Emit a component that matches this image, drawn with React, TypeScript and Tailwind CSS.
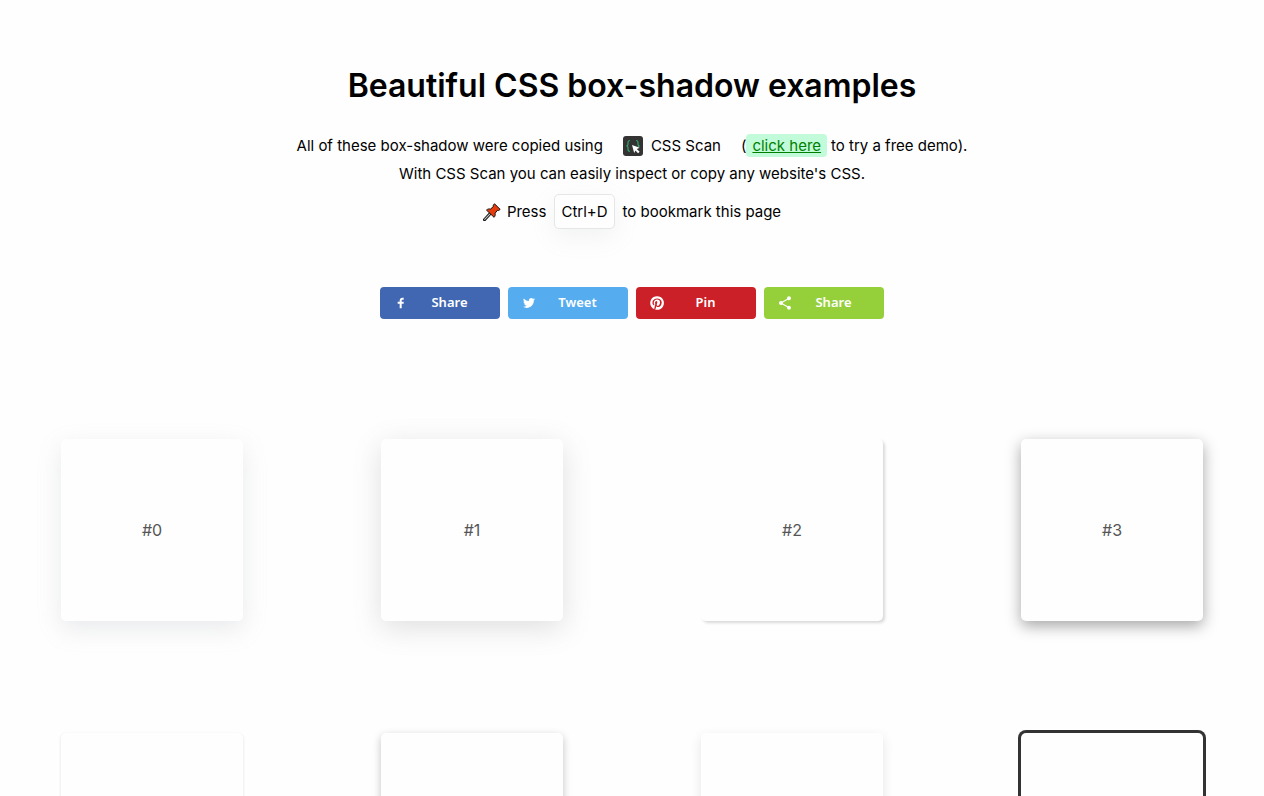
import React from "react";

const networks = [
  { name: "facebook", label: "Share", bg: "bg-[#4267b2]" },
  { name: "twitter", label: "Tweet", bg: "bg-[#55acee]" },
  { name: "pinterest", label: "Pin", bg: "bg-[#cb2027]" },
  { name: "sharethis", label: "Share", bg: "bg-[#95d03a]" },
];

const shadows = [
  "shadow-[0_8px_24px_rgba(149,157,165,0.2)]",
  "shadow-[0_7px_29px_rgba(100,100,111,0.2)]",
  "shadow-[2px_2px_3px_rgba(0,0,0,0.15)]",
  "shadow-[0_5px_15px_rgba(0,0,0,0.35)]",
  "shadow-[0_1px_3px_rgba(0,0,0,0.12)]",
  "shadow-[0_3px_8px_rgba(0,0,0,0.24)]",
  "shadow-[0_4px_12px_rgba(0,0,0,0.1)]",
  "shadow-[0_0_0_3px_#333333]",
];

function NetworkIcon({ name }: { name: string }) {
  const cls = "size-4 shrink-0 fill-white";
  if (name === "facebook")
    return (
      <svg viewBox="0 0 40 40" className={cls} aria-hidden="true">
        <path d="m21.7 16.7h5v5h-5v11.6h-5v-11.6h-5v-5h5v-2.1c0-2 0.6-4.5 1.8-5.9 1.3-1.3 2.8-2 4.7-2h3.5v5h-3.5c-0.9 0-1.5 0.6-1.5 1.5v3.5z" />
      </svg>
    );
  if (name === "twitter")
    return (
      <svg viewBox="0 0 40 40" className={cls} aria-hidden="true">
        <path d="m31.5 11.7c1.3-0.8 2.2-2 2.7-3.4-1.4 0.7-2.7 1.2-4 1.4-1.1-1.2-2.6-1.9-4.4-1.9-1.7 0-3.2 0.6-4.4 1.8-1.2 1.2-1.8 2.7-1.8 4.4 0 0.5 0.1 0.9 0.2 1.3-5.1-0.1-9.4-2.3-12.7-6.4-0.6 1-0.9 2.1-0.9 3.1 0 2.2 1 3.9 2.8 5.2-1.1-0.1-2-0.4-2.8-0.8 0 1.5 0.5 2.8 1.4 4 0.9 1.1 2.1 1.8 3.5 2.1-0.5 0.1-1 0.2-1.6 0.2-0.5 0-0.9 0-1.1-0.1 0.4 1.2 1.1 2.3 2.1 3 1.1 0.8 2.3 1.2 3.6 1.3-2.2 1.7-4.7 2.6-7.6 2.6-0.7 0-1.2 0-1.5-0.1 2.8 1.9 6 2.8 9.5 2.8 3.5 0 6.7-0.9 9.4-2.7 2.8-1.8 4.8-4.1 6.1-6.7 1.3-2.6 1.9-5.3 1.9-8.1v-0.8c1.3-0.9 2.3-2 3.1-3.2-1.1 0.5-2.3 0.8-3.5 1z" />
      </svg>
    );
  if (name === "pinterest")
    return (
      <svg viewBox="0 0 40 40" className={cls} aria-hidden="true">
        <path d="m37.3 20q0 4.7-2.3 8.6t-6.3 6.2-8.6 2.3q-2.4 0-4.8-0.7 1.3-2 1.7-3.6 0.2-0.8 1.2-4.7 0.5 0.8 1.7 1.5t2.5 0.6q2.7 0 4.8-1.5t3.3-4.2 1.2-6.1q0-2.5-1.4-4.7t-3.8-3.7-5.7-1.4q-2.4 0-4.4 0.7t-3.4 1.7-2.5 2.4-1.5 2.9-0.4 3q0 2.4 0.8 4.1t2.7 2.5q0.6 0.3 0.8-0.5 0.1-0.1 0.2-0.6t0.2-0.7q0.1-0.5-0.3-1-1.1-1.3-1.1-3.3 0-3.4 2.3-5.8t6.1-2.5q3.4 0 5.3 1.9t1.9 4.7q0 3.8-1.6 6.5t-3.9 2.6q-1.3 0-2.2-0.9t-0.5-2.4q0.2-0.8 0.6-2.1t0.7-2.3 0.2-1.6q0-1.2-0.6-1.9t-1.7-0.7q-1.4 0-2.3 1.2t-1 3.2q0 1.6 0.6 2.7l-2.2 9.4q-0.4 1.5-0.3 3.9-4.6-2-7.5-6.3t-2.8-9.4q0-4.7 2.3-8.6t6.2-6.2 8.6-2.3 8.6 2.3 6.3 6.2 2.3 8.6z" />
      </svg>
    );
  return (
    <svg viewBox="0 0 40 40" className={cls} aria-hidden="true">
      <path d="m30 26.8c2.7 0 4.8 2.2 4.8 4.8s-2.1 5-4.8 5-4.8-2.3-4.8-5c0-0.3 0-0.7 0-1.1l-11.8-6.8c-0.9 0.8-2.1 1.3-3.4 1.3-2.7 0-5-2.3-5-5s2.3-5 5-5c1.3 0 2.5 0.5 3.4 1.3l11.8-6.8c-0.1-0.4-0.2-0.8-0.2-1.1 0-2.8 2.3-5 5-5s5 2.2 5 5-2.3 5-5 5c-1.3 0-2.5-0.6-3.4-1.4l-11.8 6.8c0.1 0.4 0.2 0.8 0.2 1.2s-0.1 0.8-0.2 1.2l11.9 6.8c0.9-0.7 2.1-1.2 3.3-1.2z" />
    </svg>
  );
}

function ScanLogo() {
  return (
    <svg viewBox="0 0 20 20" className="size-5 shrink-0" aria-hidden="true">
      <rect width="20" height="20" rx="3" fill="#333333" />
      <g fill="none" stroke="#35a567" strokeWidth="1.2">
        <path d="M6.9 4.500C5.300 4.500 5 5.300 5 6.500V8.300C5 9.300 4.500 9.900 3.400 9.900C4.500 9.900 5 10.500 5 11.500V13.300C5 14.500 5.300 15.300 6.900 15.300" />
        <path d="M13.100 4.500C14.700 4.500 15 5.300 15 6.500V8.300C15 9.300 15.500 9.900 16.600 9.900C15.800 9.900 15.300 10.200 15.100 10.800" />
      </g>
      <path d="M9 9l7.700 2.800-2.900 1.300 2.800 2.700-1.500 1.400-2.700-2.800-1.200 2.600z" fill="#ffffff" />
    </svg>
  );
}

function PushPin() {
  return (
    <svg viewBox="0 0 18 18" className="size-[18px] shrink-0" aria-hidden="true">
      <path d="M7 10.800 1.500 16.700" stroke="#111111" strokeWidth="3" strokeLinecap="round" />
      <path d="M7 10.800 1.700 16.400" stroke="#c8c8c8" strokeWidth="1.100" strokeLinecap="round" />
      <path
        d="M11.500.8l5.700 5.600-1.600 1.100-1.200-.1-2.300 2.800c.3 1.500.1 2.900-1 4.100L3.500 7.100c1.200-1.200 2.600-1.400 4.100-1.100l2.700-2.400V2.200z"
        fill="#e63b0c"
        stroke="#111111"
        strokeWidth="1"
        strokeLinejoin="round"
      />
    </svg>
  );
}

export default function App() {
  return (
    <div className="min-h-screen bg-[#fefefe] pb-28 font-['Inter','Liberation_Sans',sans-serif] text-black">
      <header className="flex flex-col items-center pt-16 text-center">
        <h1 className="text-[32px] leading-[44px] font-semibold">Beautiful CSS box-shadow examples</h1>
        <div className="mt-6 text-[15px] leading-7">
          <p className="flex items-center justify-center">
            <span>All of these box-shadow were copied using</span>
            <span className="mx-5 flex items-center gap-2">
              <ScanLogo />
              CSS Scan
            </span>
            <span>(</span>
            <a href="#demo" className="mr-1 mb-[2px] rounded bg-[#c1fbd9] px-[6px] leading-[23px] text-[#008000] underline">
              click here
            </a>
            <span>to try a free demo).</span>
          </p>
          <p>With CSS Scan you can easily inspect or copy any website's CSS.</p>
          <p className="mt-[6px] flex items-center justify-center">
            <PushPin />
            <span className="ml-[6px]">Press</span>
            <kbd className="mx-2 rounded-[5px] border border-[#e6e6e6] bg-[#fefefe] px-[6px] py-[3px] font-['Inter','Liberation_Sans',sans-serif] leading-[27px] shadow-[0_8px_24px_rgba(149,157,165,0.12)]">
              Ctrl+D
            </kbd>
            <span>to bookmark this page</span>
          </p>
        </div>
        <div className="mt-[58px] flex gap-2">
          {networks.map((n) => (
            <button
              key={n.name}
              type="button"
              className={`flex h-8 w-[120px] items-center rounded px-[13px] font-['Noto_Sans','Open_Sans',sans-serif] text-[13px] font-semibold text-white ${n.bg}`}
            >
              <NetworkIcon name={n.name} />
              <span className="flex-1 pl-[3px]">{n.label}</span>
            </button>
          ))}
        </div>
      </header>
      <main className="mt-[120px] grid grid-cols-[repeat(4,182px)] justify-between gap-y-28 px-[61px]">
        {shadows.map((shadow, i) => (
          <button
            key={shadow}
            type="button"
            className={`flex h-[182px] items-center justify-center rounded-[5px] bg-[#fefefe] text-base text-[#555555] ${shadow}`}
          >
            #{i}
          </button>
        ))}
      </main>
    </div>
  );
}
